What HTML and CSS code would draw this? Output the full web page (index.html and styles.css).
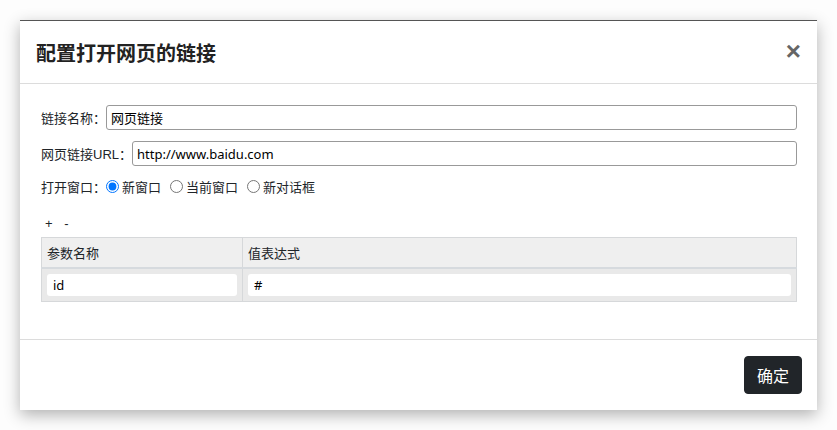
FILE: index.html
```html
<!DOCTYPE html>
<html lang="zh">
<head>
    <meta charset="UTF-8">
    <meta name="viewport" content="width=device-width, initial-scale=1.0">
    <title>配置打开网页的链接</title>
    <link rel="stylesheet" href="styles.css">
</head>
<body>

<div class="modal">
    <div class="modal-header">
        <h4 class="modal-title">配置打开网页的链接</h4>
        <span class="close">&times;</span>
    </div>

    <div class="modal-body">
        <div class="form-row">
            <label>链接名称：</label>
            <input type="text" class="text-input" value="网页链接">
        </div>
        <div class="form-row">
            <label>网页链接URL：</label>
            <input type="text" class="text-input" value="http://www.baidu.com">
        </div>
        <div class="form-row radio-row">
            <label>打开窗口：</label>
            <label class="radio"><input type="radio" name="target" checked>新窗口</label>
            <label class="radio"><input type="radio" name="target">当前窗口</label>
            <label class="radio"><input type="radio" name="target">新对话框</label>
        </div>

        <div class="tools">
            <span>+</span>
            <span>-</span>
        </div>

        <table class="params">
            <thead>
                <tr>
                    <th class="col-name">参数名称</th>
                    <th>值表达式</th>
                </tr>
            </thead>
            <tbody>
                <tr>
                    <td><input type="text" class="cell-input" value="id"></td>
                    <td><input type="text" class="cell-input" value="#"></td>
                </tr>
            </tbody>
        </table>
    </div>

    <div class="modal-footer">
        <button class="btn-ok">确定</button>
    </div>
</div>

</body>
</html>
```

FILE: styles.css
```css
body {
    margin: 0;
    padding: 20px;
    background: #fdfdfd;
    font-family: 'Liberation Sans', 'Noto Sans CJK SC', sans-serif;
    color: #212529;
}
.modal {
    width: 797px;
    background: #fff;
    border-top: 1px solid #555;
    box-shadow: 0 5px 15px rgba(0, 0, 0, .3);
}
.modal-header {
    height: 62px;
    display: flex;
    align-items: center;
    justify-content: space-between;
    padding: 0 16px;
    border-bottom: 1px solid #dcdcdc;
}
.modal-title {
    margin: 0;
    font-size: 20px;
    font-weight: bold;
    color: #222;
}
.close {
    font-size: 26px;
    font-weight: bold;
    color: #666;
    line-height: 1;
    margin-top: -2px;
}
.modal-body {
    padding: 21px 20px 37px 21px;
    font-size: 13px;
}
.form-row {
    display: flex;
    align-items: center;
    margin-bottom: 11px;
}
.text-input {
    flex: 1;
    height: 25px;
    box-sizing: border-box;
    border: 1px solid #999;
    border-radius: 3px;
    padding: 0 4px;
    font-family: 'Noto Sans', 'Noto Sans CJK SC', sans-serif;
    font-size: 13px;
    color: #000;
}
.radio-row {
    height: 19px;
    margin-bottom: 0;
}
.radio {
    display: flex;
    align-items: center;
    margin-right: 9px;
}
.radio input {
    margin: 0 3px 0 0;
    width: 13px;
    height: 13px;
}
.tools {
    margin: 20px 0 5px 4px;
    font-size: 13px;
    height: 16px;
}
.tools span { margin-right: 8px; }
.params {
    width: 100%;
    border-collapse: collapse;
    border: 1px solid #d6d8da;
}
.params th {
    background: #efefef;
    height: 29px;
    text-align: left;
    font-weight: normal;
    padding: 0 5px;
    border-right: 1px solid #d6d8da;
    border-bottom: 2px solid #d6dade;
}
.params .col-name { width: 190px; }
.params td {
    background: #e9e9e9;
    padding: 5px;
    border-right: 1px solid #d6d8da;
}
.cell-input {
    width: 100%;
    height: 22px;
    box-sizing: border-box;
    border: none;
    border-radius: 3px;
    padding: 0 6px;
    background: #fff;
    font-family: 'Noto Sans', 'Noto Sans CJK SC', sans-serif;
    font-size: 13px;
    color: #000;
}
.modal-footer {
    display: flex;
    justify-content: flex-end;
    padding: 16px 15px 16px;
    border-top: 1px solid #dcdcdc;
}
.btn-ok {
    background: #212529;
    color: #fff;
    border: 1px solid #212529;
    border-radius: 4px;
    font-family: inherit;
    font-size: 16px;
    height: 38px;
    padding: 0 12px;
}
```
